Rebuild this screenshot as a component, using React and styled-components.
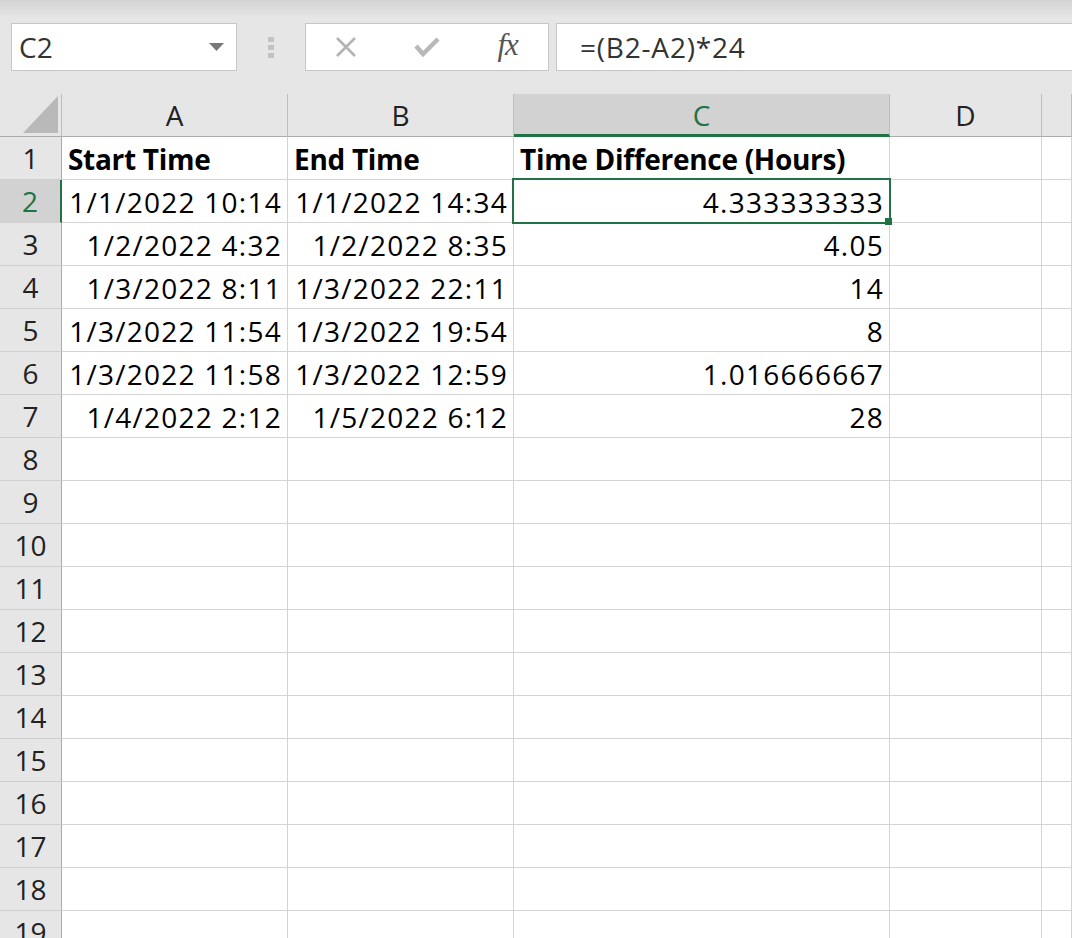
import React from 'react';
import styled, { createGlobalStyle } from 'styled-components';

const GlobalStyle = createGlobalStyle`
  html, body {
    margin: 0;
    padding: 0;
    background: #ffffff;
  }
  body {
    font-family: "Open Sans", "Noto Sans", sans-serif;
  }
`;

const GREEN = '#217346';

const Screen = styled.div`
  width: 1072px;
  height: 938px;
  overflow: hidden;
  background: #fff;
`;

const TopBar = styled.div`
  height: 94px;
  box-sizing: border-box;
  padding: 23px 0 0 11px;
  display: flex;
  align-items: flex-start;
  background: linear-gradient(#d4d4d4 0px, #e6e6e6 18px, #e6e6e6 100%);
`;

const Field = styled.div`
  height: 48px;
  box-sizing: border-box;
  background: #fff;
  border: 1px solid #c6c6c6;
  display: flex;
  align-items: center;
  font-size: 28px;
  color: #333;
`;

const NameBox = styled(Field)`
  width: 226px;
  padding: 0 12px 0 7px;
  justify-content: space-between;
`;

const Dots = styled.div`
  width: 68px;
  height: 48px;
  display: flex;
  flex-direction: column;
  align-items: center;
  justify-content: center;
  gap: 3px;

  span {
    width: 6px;
    height: 5px;
    background: #c2c2c2;
  }
`;

const Tools = styled(Field)`
  width: 244px;
  display: grid;
  grid-template-columns: repeat(3, 1fr);
  justify-items: center;
`;

const Fx = styled.span`
  font-family: "Liberation Serif", serif;
  font-style: italic;
  font-size: 31px;
  color: #555;
  letter-spacing: -1px;
  margin-top: -4px;
`;

const Formula = styled(Field)`
  flex: 1;
  margin-left: 7px;
  border-right: none;
  padding-left: 23px;
  letter-spacing: 0.8px;
`;

const Sheet = styled.div`
  display: grid;
  grid-template-columns: 62px 226px 226px 376px 152px 1fr;
  grid-auto-rows: 43px;
`;

const Cell = styled.div`
  position: relative;
  box-sizing: border-box;
  border-right: 1px solid #d4d4d4;
  border-bottom: 1px solid #d4d4d4;
  padding: 1px ${p => (p.$right ? '5px' : '6px')} 0 6px;
  font-size: 28px;
  line-height: 42px;
  color: #000;
  white-space: nowrap;
  text-align: ${p => (p.$right ? 'right' : 'left')};
  font-weight: ${p => (p.$bold ? 700 : 400)};
  letter-spacing: ${p => (p.$bold ? '-0.3px' : '1.25px')};
`;

const Selection = styled.span`
  position: absolute;
  top: -2px;
  left: -2px;
  right: -2px;
  bottom: -2px;
  border: 2px solid ${GREEN};
  z-index: 1;
  pointer-events: none;
`;

const Handle = styled.span`
  position: absolute;
  right: -3px;
  bottom: -3px;
  width: 7px;
  height: 7px;
  background: ${GREEN};
  z-index: 2;
`;

const ColHead = styled.div`
  box-sizing: border-box;
  background: ${p => (p.$active ? '#d2d2d2' : '#e6e6e6')};
  border-right: 1px solid #bdbdbd;
  border-bottom: ${p => (p.$active ? `3px solid ${GREEN}` : '1px solid #ababab')};
  font-size: 28px;
  line-height: 42px;
  text-align: center;
  color: ${p => (p.$active ? GREEN : '#222')};
`;

const Corner = styled(ColHead)`
  border-right: 1px solid #bdbdbd;
  display: flex;
  align-items: flex-end;
  justify-content: flex-end;
  padding: 0 3px 3px 0;
`;

const RowHead = styled.div`
  box-sizing: border-box;
  background: ${p => (p.$active ? '#d2d2d2' : '#e6e6e6')};
  border-right: ${p => (p.$active ? `2px solid ${GREEN}` : '1px solid #ababab')};
  border-bottom: 1px solid #d0d0d0;
  font-size: 28px;
  line-height: 42px;
  text-align: center;
  color: ${p => (p.$active ? GREEN : '#222')};
`;

const data = [
  ['1/1/2022 10:14', '1/1/2022 14:34', '4.333333333'],
  ['1/2/2022 4:32', '1/2/2022 8:35', '4.05'],
  ['1/3/2022 8:11', '1/3/2022 22:11', '14'],
  ['1/3/2022 11:54', '1/3/2022 19:54', '8'],
  ['1/3/2022 11:58', '1/3/2022 12:59', '1.016666667'],
  ['1/4/2022 2:12', '1/5/2022 6:12', '28'],
];

const columns = ['A', 'B', 'C', 'D', ''];

function App() {
  const rows = [];
  for (let r = 1; r <= 19; r++) {
    const active = r === 2;
    rows.push(<RowHead key={`h${r}`} $active={active}>{r}</RowHead>);
    if (r === 1) {
      rows.push(<Cell key="a1" $bold>Start Time</Cell>);
      rows.push(<Cell key="b1" $bold>End Time</Cell>);
      rows.push(<Cell key="c1" $bold>Time Difference (Hours)</Cell>);
    } else if (r <= 7) {
      const [a, b, c] = data[r - 2];
      rows.push(<Cell key={`a${r}`} $right>{a}</Cell>);
      rows.push(<Cell key={`b${r}`} $right>{b}</Cell>);
      rows.push(
        <Cell key={`c${r}`} $right>
          {c}
          {active && <Selection />}
          {active && <Handle />}
        </Cell>
      );
    } else {
      rows.push(<Cell key={`a${r}`} />);
      rows.push(<Cell key={`b${r}`} />);
      rows.push(<Cell key={`c${r}`} />);
    }
    rows.push(<Cell key={`d${r}`} />);
    rows.push(<Cell key={`e${r}`} />);
  }

  return (
    <Screen>
      <GlobalStyle />
      <TopBar>
        <NameBox>
          <span>C2</span>
          <svg width="15" height="8" viewBox="0 0 15 8">
            <polygon points="0,0 15,0 7.5,8" fill="#777" />
          </svg>
        </NameBox>
        <Dots><span /><span /><span /></Dots>
        <Tools>
          <svg width="22" height="20" viewBox="0 0 22 20">
            <path d="M2 1 L20 19 M20 1 L2 19" stroke="#b4b4b4" strokeWidth="2.6" fill="none" />
          </svg>
          <svg width="26" height="20" viewBox="0 0 26 20">
            <path d="M2 9 L9 17 L24 2" stroke="#b8b8b8" strokeWidth="4.5" fill="none" />
          </svg>
          <Fx>fx</Fx>
        </Tools>
        <Formula>=(B2-A2)*24</Formula>
      </TopBar>
      <Sheet>
        <Corner>
          <svg width="35" height="37" viewBox="0 0 35 37">
            <polygon points="0,37 35,37 35,0" fill="#b9b9b9" />
          </svg>
        </Corner>
        {columns.map(c => (
          <ColHead key={c || 'e'} $active={c === 'C'}>{c}</ColHead>
        ))}
        {rows}
      </Sheet>
    </Screen>
  );
}

export default App;
